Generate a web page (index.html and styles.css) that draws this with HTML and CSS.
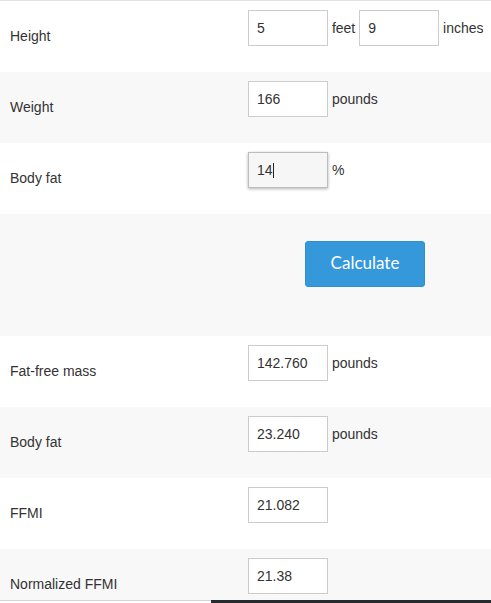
FILE: index.html
```html
<!DOCTYPE html>
<html lang="en">
<head>
    <meta charset="UTF-8">
    <meta name="viewport" content="width=device-width, initial-scale=1.0">
    <title>FFMI Calculator</title>
    <link rel="stylesheet" href="styles.css">
</head>
<body>
    <div class="calc">
        <!-- inputs -->
        <div class="row">
            <div class="label">Height</div>
            <div class="field">
                <input class="num" type="text" value="5"> feet <input class="num" type="text" value="9"> inches
            </div>
        </div>
        <div class="row alt">
            <div class="label">Weight</div>
            <div class="field">
                <input class="num" type="text" value="166"> pounds
            </div>
        </div>
        <div class="row">
            <div class="label">Body fat</div>
            <div class="field">
                <span class="focused"><input class="num active" type="text" value="14"></span> %
            </div>
        </div>
        <div class="row alt action">
            <button class="btn">Calculate</button>
        </div>
        <!-- results -->
        <div class="row">
            <div class="label">Fat-free mass</div>
            <div class="field">
                <input class="num" type="text" value="142.760" readonly> pounds
            </div>
        </div>
        <div class="row alt">
            <div class="label">Body fat</div>
            <div class="field">
                <input class="num" type="text" value="23.240" readonly> pounds
            </div>
        </div>
        <div class="row">
            <div class="label">FFMI</div>
            <div class="field">
                <input class="num" type="text" value="21.082" readonly>
            </div>
        </div>
        <div class="row alt">
            <div class="label">Normalized FFMI</div>
            <div class="field">
                <input class="num" type="text" value="21.38" readonly>
            </div>
        </div>
    </div>
    <div class="bottombar">
        <span class="bar-left"></span>
        <span class="bar-right"></span>
    </div>
</body>
</html>
```
FILE: styles.css
```css
*{
    margin: 0;
    padding: 0;
    box-sizing: border-box;
}
body{
    font-family: "Liberation Sans", Arial, sans-serif;
    font-size: 14px;
    color: #333;
    background: #fff;
}
.calc{
    border-top: 1px solid #e3e3e3;
}
.row{
    display: flex;
    height: 71px;
    background: #fff;
}
.row.alt{
    background: #f8f8f8;
}
.label{
    width: 248px;
    padding-left: 10px;
    align-self: center;
    margin-bottom: 2px;
}
.field{
    padding-top: 9px;
    white-space: nowrap;
}
.num{
    width: 80px;
    height: 36px;
    padding: 0 8px;
    border: 1px solid #ccc;
    background: #fff;
    font-family: "Liberation Sans", Arial, sans-serif;
    font-size: 14px;
    color: #333;
    outline: none;
}
.num.active{
    background: #f6f6f6;
    border-color: #bdbdbd;
    box-shadow: 0 1px 3px rgba(0,0,0,0.3);
}
.focused{
    position: relative;
    display: inline-block;
}
/* text caret */
.focused::after{
    content: "";
    position: absolute;
    left: 25px;
    top: 11px;
    width: 1px;
    height: 15px;
    background: #222;
}
.action{
    height: 122px;
    padding: 27px 0 0 305px;
}
.btn{
    width: 120px;
    height: 46px;
    padding-bottom: 4px;
    background: #3498db;
    border: 1px solid #2f8fd0;
    border-radius: 3px;
    color: #fff;
    font-family: Lato, "Open Sans", sans-serif;
    font-size: 17px;
    cursor: pointer;
}
.bottombar{
    position: fixed;
    left: 0;
    right: 0;
    bottom: 0;
    height: 3px;
    display: flex;
}
.bar-left{
    width: 211px;
    background: #fff;
    border-top: 1px solid #d4d4d4;
}
.bar-right{
    flex: 1;
    background: #252b2e;
}
```
